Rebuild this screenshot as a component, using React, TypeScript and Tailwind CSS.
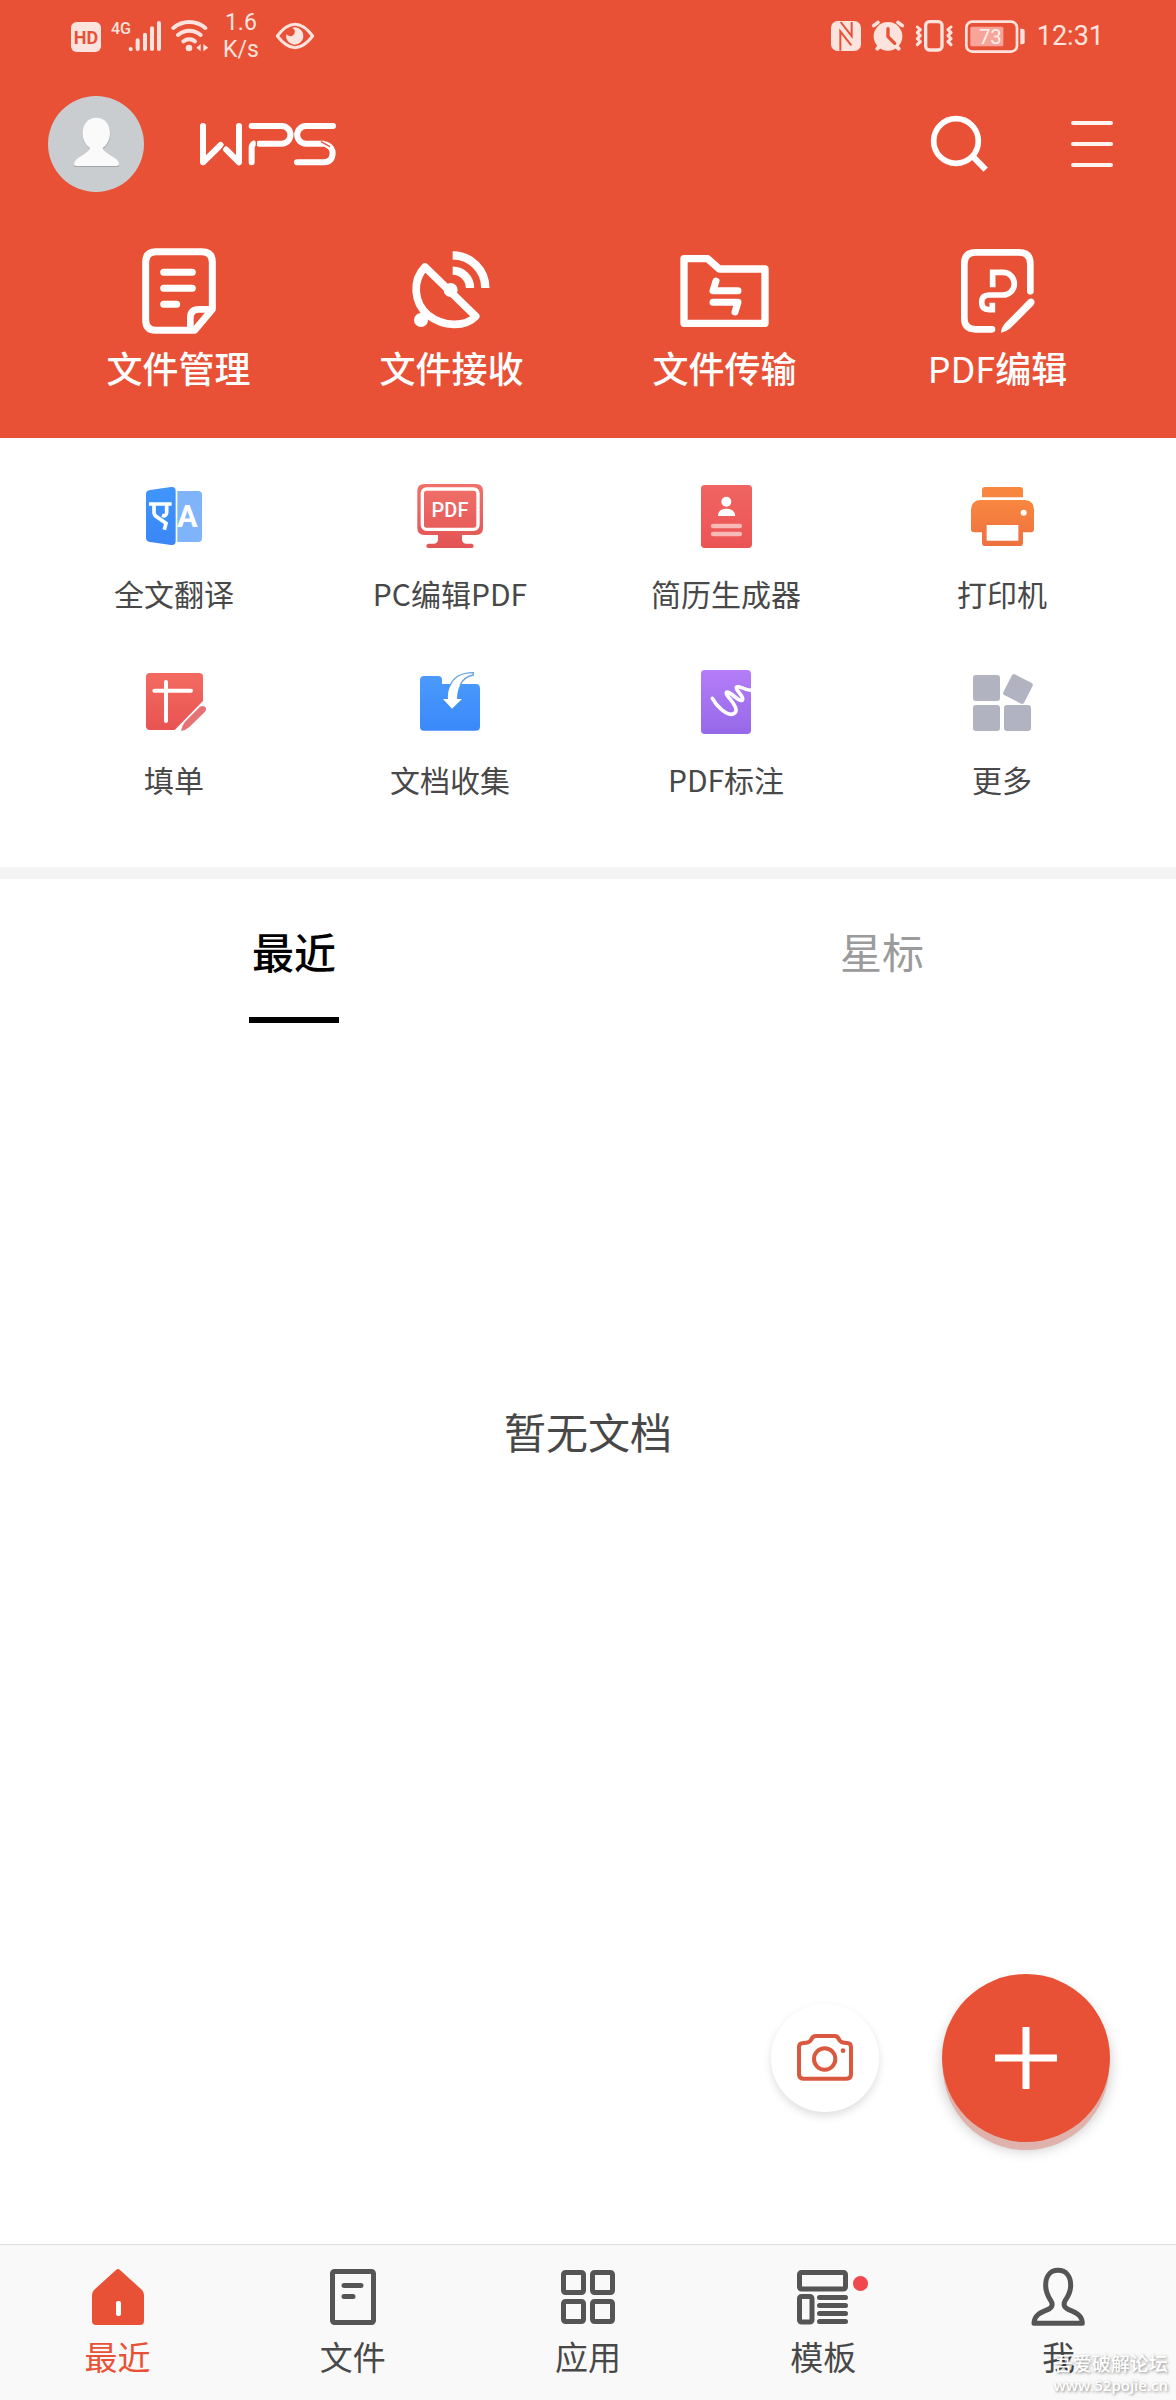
import type { ReactNode } from "react";

type Item = { label: ReactNode; icon: ReactNode };

/* ---------- status bar ---------- */

function SignalIcons() {
  return (
    <>
      <svg className="h-10 w-[30px]" viewBox="93 48 90 120" fill="none" aria-label="HD">
        <rect x="93" y="66" width="90" height="90" rx="17" fill="#fde3dd" />
        <text x="138" y="131" textAnchor="middle" fontSize="54" fontWeight="700" fill="#e95136" className="font-['Roboto',sans-serif]">
          HD
        </text>
      </svg>
      <svg className="ml-[10px] h-10 w-[52px]" viewBox="213 48 156 120" aria-label="4G">
        <text x="213" y="102" fontSize="48" fontWeight="500" fill="#fde3dd" className="font-['Roboto',sans-serif]">
          4G
        </text>
        <g stroke="#fde3dd" strokeWidth="12" strokeLinecap="round">
          <path d="M272 147V148M293 121V147M315 104V147M336 85V147M357 69V147" />
        </g>
      </svg>
      <svg className="ml-2 h-10 w-[38px]" viewBox="393 48 114 120" fill="none" aria-label="Wi-Fi">
        <g stroke="#fde3dd" strokeWidth="12" strokeLinecap="round">
          <path d="M400 84C428 60 468 60 496 84" />
          <path d="M414 105C434 88 462 88 482 105" />
          <path d="M430 124C441 116 455 116 465 124" />
        </g>
        <circle cx="447" cy="144" r="10" fill="#fde3dd" />
        <path d="M482 132V154L469 143ZM490 132V154L505 143Z" fill="#fde3dd" />
      </svg>
    </>
  );
}

function EyeIcon() {
  return (
    <svg className="ml-4 h-10 w-10" viewBox="708 48 120 120" fill="none" aria-hidden="true">
      <path d="M715 108C735 82 750 73 768 73S801 82 821 108C801 134 786 143 768 143S735 134 715 108Z" stroke="#fde3dd" strokeWidth="9" strokeLinejoin="round" />
      <path d="M768 82A26 26 0 1 1 742 102C750 112 764 110 767 98C769 90 764 86 760 84Q764 82 768 82Z" fill="#fde3dd" />
    </svg>
  );
}

function DeviceIcons() {
  return (
    <>
      <svg className="h-10 w-[30px]" viewBox="92 48 90 120" fill="none" aria-label="NFC">
        <rect x="92" y="63" width="90" height="90" rx="20" fill="#fde3dd" />
        <path d="M121 66L154 108V66M120 152V94L153 136" stroke="#e95136" strokeWidth="6" />
      </svg>
      <svg className="ml-[10px] h-10 w-[34px]" viewBox="213 48 102 120" fill="none" aria-label="闹钟">
        <circle cx="264" cy="109" r="43" fill="#fde3dd" />
        <g stroke="#fde3dd" strokeWidth="11" strokeLinecap="round">
          <path d="M221 77L234 67M307 77L294 67" />
          <path d="M232 146L240 138M296 146L288 138" strokeWidth="12" />
        </g>
        <path d="M264 86V110L284 130" stroke="#e95136" strokeWidth="10" strokeLinecap="round" />
      </svg>
      <svg className="ml-[10px] h-10 w-[38px]" viewBox="345 48 114 120" fill="none" aria-label="振动">
        <rect x="377" y="65" width="49" height="85" rx="11" stroke="#fde3dd" strokeWidth="10" />
        <g stroke="#fde3dd" strokeWidth="9" strokeLinecap="round" strokeLinejoin="round">
          <path d="M352 81L361 89L352 98L361 107L352 116L361 125L352 134" />
          <path d="M453 81L444 89L453 98L444 107L453 116L444 125L453 134" />
        </g>
      </svg>
      <svg className="ml-3 h-10 w-[60px]" viewBox="494 48 180 120" fill="none" aria-label="73%">
        <rect x="498" y="65" width="152" height="90" rx="18" stroke="#fde3dd" strokeWidth="8" />
        <rect x="510" y="80" width="99" height="59" rx="5" fill="#f6a598" />
        <path d="M660 86H666Q673 86 673 92V127Q673 133 666 133H660Z" fill="#fde3dd" />
        <text x="570" y="131" textAnchor="middle" fontSize="61" fill="#fff0ed" className="font-['Roboto',sans-serif]">
          73
        </text>
      </svg>
    </>
  );
}

/* ---------- title bar ---------- */

function Avatar() {
  return (
    <svg className="size-24" viewBox="54 48 288 288" fill="none" aria-hidden="true">
      <circle cx="198" cy="192" r="144" fill="#cacdcf" />
      <path d="M200 116C226 116 241 136 241 162C241 183 232 198 219 207C222 219 240 226 262 242Q268 248 266 261H133Q131 248 137 242C160 226 177 219 181 207C168 198 158 183 158 162C158 136 174 116 200 116Z" fill="#a4a7a9" />
      <path d="M199 113C225 113 240 133 240 159C240 180 231 195 218 204C221 216 239 223 261 239Q267 245 267 253Q266 258 260 258H138Q132 258 132 253Q132 245 138 239C160 223 177 216 180 204C167 195 158 180 158 159C158 133 173 113 199 113Z" fill="#fafafa" />
    </svg>
  );
}

function Logo() {
  return (
    <svg className="ml-14 h-11 w-[136px]" viewBox="510 125 408 132" fill="none" stroke="#fff" strokeWidth="18" strokeLinecap="round" strokeLinejoin="round" role="img" aria-label="WPS">
      <path d="M519 137V246L572 194" />
      <path d="M588 207L627 246V137" />
      <path d="M665 137H755A26 26 0 0 1 755 190H688" />
      <path d="M665 246V202Q665 194 671 190" />
      <path d="M909 137H828A26 26 0 0 0 828 190H880" />
      <path d="M890 193C902 198 908 208 908 219Q906 246 882 246H801" />
      <path d="M590 186L572 212M679 180V200M873 184L900 199" stroke="#e95136" strokeWidth="4" strokeLinecap="butt" />
    </svg>
  );
}

/* ---------- quick actions on the red header ---------- */

const quickActions: Item[] = [
  {
    label: "文件管理",
    icon: (
      <svg className="size-24" viewBox="153 36 288 288" fill="none" stroke="#fff" strokeWidth="21" strokeLinecap="round" strokeLinejoin="round">
        <path d="M344 301H228Q197 301 197 270V97Q197 65 228 65H366Q397 65 397 97V238Z" />
        <path d="M331 299V264Q331 238 357 238H394" strokeWidth="20" />
        <path d="M251 127H337M251 175H337M251 223H290" />
      </svg>
    ),
  },
  {
    label: "文件接收",
    icon: (
      <svg className="size-24" viewBox="973 36 288 288" fill="none" stroke="#fff" strokeWidth="23" strokeLinejoin="round">
        <path d="M1036 111L1188 259C1158 291 1092 292 1046 256C1000 218 998 150 1036 111Z" />
        <circle cx="1113" cy="180" r="21" fill="#fff" stroke="none" />
        <circle cx="1024" cy="270" r="21" fill="#fff" stroke="none" />
        <path d="M1119 122A52 52 0 0 1 1171 174M1119 76A98 98 0 0 1 1217 174" strokeWidth="25" />
      </svg>
    ),
  },
  {
    label: "文件传输",
    icon: (
      <svg className="size-24" viewBox="170 36 288 288" fill="none" stroke="#fff" strokeWidth="22" strokeLinecap="round" strokeLinejoin="round">
        <path d="M191 86H262L297 117H434V280H191Z" />
        <path d="M287 153L278 182H353M278 217H353L344 246" strokeWidth="21" />
      </svg>
    ),
  },
  {
    label: (
      <>
        <span className="font-normal">PDF</span>编辑
      </>
    ),
    icon: (
      <svg className="size-24" viewBox="991 36 288 288" fill="none" stroke="#fff" strokeWidth="20" strokeLinecap="round" strokeLinejoin="round">
        <path d="M1117 298H1068Q1034 298 1034 265V101Q1034 67 1068 67H1198Q1232 67 1232 101V184" />
        <path d="M1119 172V127H1150A30 30 0 0 1 1150 195H1108Q1086 195 1086 217Q1086 239 1108 239H1118V218" strokeWidth="17" strokeLinecap="butt" strokeLinejoin="miter" />
        <path d="M1227 208Q1236 203 1242 209Q1248 216 1241 226L1172 295Q1160 306 1144 308Q1145 292 1157 279Z" fill="#fff" stroke="none" />
      </svg>
    ),
  },
];

/* ---------- coloured tools ---------- */

function Gradient({ id, from, to }: { id: string; from: string; to: string }) {
  return (
    <defs>
      <linearGradient id={id} x1="0" y1="0" x2="0" y2="1">
        <stop offset="0" stopColor={from} />
        <stop offset="1" stopColor={to} />
      </linearGradient>
    </defs>
  );
}

const tools: Item[] = [
  {
    label: "全文翻译",
    icon: (
      <svg className="size-[72px]" viewBox="144 60 216 216" fill="none">
        <Gradient id="translate" from="#4096fb" to="#3a86f6" />
        <path d="M262 93H325Q336 93 336 104V235Q336 246 325 246H262Z" fill="#7fb4fb" />
        <path d="M180 90L243 81Q257 79 257 93V243Q257 257 243 255L180 246Q168 244 168 233V102Q168 92 180 90Z" fill="url(#translate)" />
        <path d="M177 132H245M192 132V158Q193 166 202 172L228 190L223 209M230 132V158Q229 171 216 166" stroke="#fff" strokeWidth="11" />
        <text x="292" y="201" textAnchor="middle" fontSize="92" fontWeight="700" fill="#fff" className="font-['Roboto',sans-serif]">
          A
        </text>
      </svg>
    ),
  },
  {
    label: "PC编辑PDF",
    icon: (
      <svg className="size-[72px]" viewBox="972 60 216 216" fill="none">
        <Gradient id="monitor" from="#f0716a" to="#e35354" />
        <path d="M1003 72H1158Q1179 72 1179 93V204Q1179 225 1158 225H1116V240Q1117 249 1127 251H1145Q1151 252 1151 258Q1151 264 1145 264H1015Q1009 264 1009 258Q1009 252 1015 251H1033Q1043 249 1044 240V225H1003Q982 225 982 204V93Q982 72 1003 72Z" fill="url(#monitor)" />
        <rect x="997" y="87" width="167" height="121" rx="13" stroke="#fff" strokeWidth="10" />
        <text x="1080" y="170" textAnchor="middle" fontSize="60" fontWeight="500" fill="#fff" className="font-['Roboto',sans-serif]">
          PDF
        </text>
      </svg>
    ),
  },
  {
    label: "简历生成器",
    icon: (
      <svg className="size-[72px]" viewBox="180 60 216 216" fill="none">
        <Gradient id="resume" from="#ef6461" to="#ec5454" />
        <rect x="213" y="75" width="153" height="189" rx="11" fill="url(#resume)" />
        <circle cx="289" cy="125" r="15" fill="#fff" />
        <path d="M264 168Q264 146 289 146T316 168Z" fill="#fff" />
        <path d="M249 198H330M249 222H330" stroke="#f9b9b7" strokeWidth="13" strokeLinecap="round" />
      </svg>
    ),
  },
  {
    label: "打印机",
    icon: (
      <svg className="size-[72px]" viewBox="1008 60 216 216" fill="none">
        <Gradient id="printer" from="#f8873f" to="#ee7040" />
        <path d="M1056 112V91Q1056 81 1066 81H1169Q1179 81 1179 91V112Z" fill="#f9863e" />
        <path d="M1051 120H1184Q1212 122 1212 148V208Q1212 217 1203 217H1179V248Q1179 258 1169 258H1066Q1056 258 1056 248V217H1032Q1023 217 1023 208V148Q1024 122 1051 120Z" fill="url(#printer)" />
        <path d="M1070 195H1165V242H1070Z" fill="#fff" />
        <circle cx="1181" cy="158" r="9" fill="#fff" />
      </svg>
    ),
  },
  {
    label: "填单",
    icon: (
      <svg className="size-[72px]" viewBox="144 618 216 216" fill="none">
        <Gradient id="form" from="#f36b60" to="#e85352" />
        <path d="M180 639H328Q339 639 339 650V723L254 810H180Q168 810 168 799V650Q168 639 180 639Z" fill="url(#form)" />
        <path d="M193 692H303M228 666V783" stroke="#fff" strokeWidth="12" strokeLinecap="round" />
        <path d="M329 741Q338 735 345 740Q351 746 345 755L299 800Q288 810 273 813Q275 797 285 785Z" fill="#e57376" />
      </svg>
    ),
  },
  {
    label: "文档收集",
    icon: (
      <svg className="size-[72px]" viewBox="972 618 216 216" fill="none">
        <Gradient id="collect" from="#4b9afb" to="#3a89fb" />
        <path d="M1002 648H1044Q1056 648 1056 660V672H1157Q1170 672 1170 685V800Q1170 812 1157 812H1002Q990 812 990 800V660Q990 648 1002 648Z" fill="url(#collect)" />
        <path d="M1074 717C1072 676 1096 638 1150 638V645C1122 650 1102 674 1101 717H1116L1086 746L1059 717Z" fill="#fff" />
        <path d="M1079 679C1089 653 1114 638 1150 638V645C1134 648 1118 658 1110 676" stroke="#6ba6e0" strokeWidth="4" />
      </svg>
    ),
  },
  {
    label: "PDF标注",
    icon: (
      <svg className="size-[72px]" viewBox="180 618 216 216" fill="none">
        <Gradient id="annotate" from="#b57df8" to="#9669e8" />
        <rect x="213" y="630" width="150" height="192" rx="11" fill="url(#annotate)" />
        <path d="M247 715C262 742 287 762 304 763C330 760 316 735 296 712C282 694 290 692 304 702C318 714 338 730 338 716C338 706 317 690 319 682C325 674 341 690 364 691" stroke="#fff" strokeWidth="11" strokeLinecap="round" />
      </svg>
    ),
  },
  {
    label: "更多",
    icon: (
      <svg className="size-[72px]" viewBox="1008 618 216 216" fill="#b1b3c1">
        <rect x="1029" y="645" width="81" height="78" rx="9" />
        <rect x="1029" y="735" width="81" height="78" rx="9" />
        <rect x="1122" y="735" width="81" height="78" rx="9" />
        <rect x="1129" y="652" width="70" height="70" rx="8" transform="rotate(27 1164 687)" />
      </svg>
    ),
  },
];

/* ---------- bottom navigation ---------- */

const navItems: (Item & { active?: boolean; dot?: boolean })[] = [
  {
    label: "最近",
    active: true,
    icon: (
      <svg className="size-[60px]" viewBox="0 0 60 60">
        <path d="M28 3Q30 1 32 3L54 23Q56 25 56 28V54Q56 58 52 58H8Q4 58 4 54V28Q4 25 6 23Z" fill="#e95136" />
        <rect x="28" y="34" width="5" height="15" rx="2" fill="#fff" />
      </svg>
    ),
  },
  {
    label: "文件",
    icon: (
      <svg className="size-[60px]" viewBox="0 0 60 60" fill="none" stroke="#555" strokeWidth="5" strokeLinecap="round">
        <rect x="9.500" y="4.500" width="41" height="51" rx="2" />
        <path d="M21 18.500H38M21 29.500H30" />
      </svg>
    ),
  },
  {
    label: "应用",
    icon: (
      <svg className="size-[60px]" viewBox="0 0 60 60" fill="none" stroke="#555" strokeWidth="5">
        <rect x="5.500" y="5.500" width="20" height="20" rx="2" />
        <rect x="34.500" y="5.500" width="20" height="20" rx="2" />
        <rect x="5.500" y="34.500" width="20" height="20" rx="2" />
        <rect x="34.500" y="34.500" width="20" height="20" rx="2" />
      </svg>
    ),
  },
  {
    label: "模板",
    dot: true,
    icon: (
      <svg className="size-[60px]" viewBox="0 0 60 60" fill="none" stroke="#555" strokeWidth="5" strokeLinecap="round">
        <rect x="6.500" y="5.500" width="46" height="16.500" rx="2" />
        <rect x="6.500" y="29.500" width="12.500" height="25.500" rx="2" />
        <path d="M26.500 30.500H52.500M26.500 38.500H52.500M26.500 46.500H52.500M26.500 54.500H52.500" />
      </svg>
    ),
  },
  {
    label: "我",
    icon: (
      <svg className="size-[60px]" viewBox="805 111 180 180" fill="none" stroke="#555" strokeWidth="15" strokeLinejoin="round">
        <path d="M895 121C870 121 858 141 858 166C858 188 865 199 873 211C881 223 878 233 864 239C842 248 823 256 823 280H968C968 256 949 248 927 239C913 233 910 223 917 211C925 199 933 188 933 166C933 141 921 121 895 121Z" />
      </svg>
    ),
  },
];

export default function App() {
  return (
    <div className="flex min-h-screen flex-col bg-white font-['Noto_Sans_CJK_SC',sans-serif]">
      <header className="bg-[#e95136] pb-[46px] text-white">
        <div className="flex h-[72px] items-center justify-between pr-[72px] pl-[71px]">
          <div className="flex items-center">
            <SignalIcons />
            <p className="ml-[14px] text-center font-['Roboto',sans-serif] text-[23px] leading-[27px] text-[#fde3dd]">
              1.6
              <br />
              K/s
            </p>
            <EyeIcon />
          </div>
          <div className="flex items-center">
            <DeviceIcons />
            <time className="ml-3 font-['Roboto',sans-serif] text-[27px] leading-8 text-[#fde3dd]">12:31</time>
          </div>
        </div>

        <div className="flex h-36 items-center px-12">
          <button type="button" aria-label="账号">
            <Avatar />
          </button>
          <Logo />
          <button type="button" aria-label="搜索" className="ml-auto">
            <svg className="size-[60px]" viewBox="90 102 180 180" fill="none" stroke="#fff">
              <circle cx="168" cy="183" r="67" strokeWidth="17" />
              <path d="M219 230L257 269" strokeWidth="18" />
            </svg>
          </button>
          <button type="button" aria-label="菜单" className="mr-3 ml-[78px]">
            <svg className="h-12 w-12" viewBox="504 120 144 144" fill="none" stroke="#fff3ef" strokeWidth="12" strokeLinecap="round">
              <path d="M519 129H633M519 192H633M519 255H633" />
            </svg>
          </button>
        </div>

        <div className="grid grid-cols-4 px-[42px] pt-[26px]">
          {quickActions.map((item, i) => (
            <button key={i} type="button" className="flex flex-col items-center gap-1">
              {item.icon}
              <span className="text-4xl leading-[50px] font-medium">{item.label}</span>
            </button>
          ))}
        </div>
      </header>

      <section className="grid grid-cols-4 gap-y-[52px] border-b-12 border-[#f4f4f4] px-9 pt-[42px] pb-[67px]">
        {tools.map((item, i) => (
          <button key={i} type="button" className="flex flex-col items-center gap-5">
            {item.icon}
            <span className="text-3xl leading-[42px] text-[#484848]">{item.label}</span>
          </button>
        ))}
      </section>

      <div role="tablist" className="grid grid-cols-2 text-[42px]">
        <button type="button" role="tab" aria-selected="true" className="flex h-36 flex-col items-center justify-between pt-[42px] font-medium text-black">
          <span className="leading-[60px]">最近</span>
          <span className="h-[6px] w-[90px] bg-black" />
        </button>
        <button type="button" role="tab" aria-selected="false" className="flex h-36 flex-col items-center pt-[42px] text-[#9b9b9b]">
          <span className="leading-[60px]">星标</span>
        </button>
      </div>

      <main className="relative flex-1 pt-[378px] pb-[300px]">
        <p className="text-center text-[42px] leading-[60px] text-[#484848]">暂无文档</p>
        <div className="absolute right-[66px] bottom-[102px] flex items-center gap-[63px]">
          <button type="button" aria-label="拍照" className="flex size-[108px] items-center justify-center rounded-full bg-white shadow-[0_4px_9px_rgba(0,0,0,0.13)]">
            <svg className="size-[60px]" viewBox="165 234 180 180" fill="none" stroke="#d9583f" strokeWidth="12" strokeLinejoin="round">
              <path d="M190 279Q208 279 213 270Q217 258 228 258H283Q294 258 298 270Q303 279 321 279Q333 279 333 292V373Q333 386 320 386H190Q177 386 177 373V292Q177 279 190 279Z" />
              <circle cx="254" cy="327" r="32" />
              <circle cx="309" cy="302" r="7" fill="#d9583f" stroke="none" />
            </svg>
          </button>
          <button type="button" aria-label="新建" className="flex size-[168px] items-center justify-center rounded-full bg-[#e95136] shadow-[0_9px_0_-1px_#dfb3ac,0_8px_14px_rgba(0,0,0,0.22)]">
            <svg className="size-[62px]" viewBox="0 0 62 62" stroke="#fff" strokeWidth="7">
              <path d="M31 0V62M0 31H62" />
            </svg>
          </button>
        </div>
      </main>

      <nav className="relative grid grid-cols-5 border-t border-[#dedede] bg-[#f9f9f9] pt-[22px] pb-[22px]">
        {navItems.map((item, i) => (
          <a key={i} href="#" className={item.active ? "flex flex-col items-center gap-[7px] text-[#e95136]" : "flex flex-col items-center gap-[7px] text-[#484848]"}>
            <span className="relative">
              {item.icon}
              {item.dot && <span className="absolute top-[9px] left-[60px] size-[15px] rounded-full bg-[#f2484d]" />}
            </span>
            <span className="text-[33px] leading-[44px]">{item.label}</span>
          </a>
        ))}
        <p className="pointer-events-none absolute right-2 bottom-[5px] text-center text-[19px] leading-5 font-medium text-white [text-shadow:1px_1px_3px_rgba(0,0,0,0.45)]">
          吾爱破解论坛
          <br />
          <span className="font-['Open_Sans',sans-serif] text-[15px] font-semibold">www.52pojie.cn</span>
        </p>
      </nav>
    </div>
  );
}
